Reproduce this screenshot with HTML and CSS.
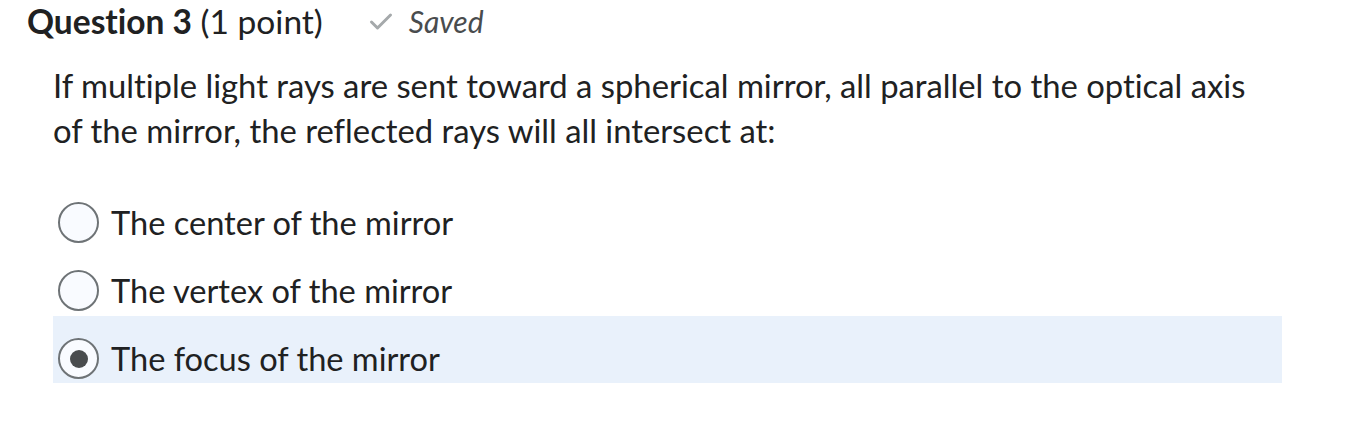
FILE: index.html
```html
<!DOCTYPE html>
<html lang="en">
<head>
<meta charset="utf-8">
<link rel="stylesheet" href="styles.css">
</head>
<body>
<div class="question">
  <div class="q-header">
    <h2 class="q-title"><strong>Question 3</strong> (1 point)</h2>
    <span class="saved">
      <svg class="check" width="24" height="19" viewBox="0 0 24 19"><path d="M2.5 10 L8.5 16 L21.5 3" fill="none" stroke="#a5a9ab" stroke-width="3" stroke-linecap="round" stroke-linejoin="round"/></svg>
      <em>Saved</em>
    </span>
  </div>
  <p class="q-text">If multiple light rays are sent toward a spherical mirror, all parallel to the optical axis of the mirror, the reflected rays will all intersect at:</p>
  <div class="options">
    <label class="option"><span class="radio"></span><span class="opt-text">The center of the mirror</span></label>
    <label class="option"><span class="radio"></span><span class="opt-text">The vertex of the mirror</span></label>
    <label class="option selected"><span class="radio"><span class="dot"></span></span><span class="opt-text">The focus of the mirror</span></label>
  </div>
</div>
</body>
</html>
```
FILE: styles.css
```css
html, body {
  margin: 0;
  padding: 0;
  background: #ffffff;
}
body {
  font-family: Lato, "Liberation Sans", sans-serif;
  font-variant-ligatures: none;
  color: #202122;
}
.question {
  width: 1356px;
}
.q-header {
  display: flex;
  align-items: center;
  padding-left: 27px;
  height: 42px;
}
.q-title {
  margin: 0;
  font-size: 33.5px;
  font-weight: 400;
}
.q-title strong {
  font-weight: 700;
}
.saved {
  display: flex;
  align-items: center;
  margin-left: 46px;
  color: #494c4e;
  font-size: 30px;
}
.check {
  margin-right: 16px;
}
.saved em {
  font-style: italic;
}
.q-text {
  margin: 21px 0 0 53px;
  width: 1215px;
  font-size: 32.8px;
  line-height: 45px;
}
.options {
  margin-top: 27px;
  width: 1229px;
  margin-left: 53px;
}
.option {
  box-sizing: border-box;
  display: flex;
  align-items: center;
  height: 67px;
  padding: 22px 0 4px 5px;
  font-size: 32.6px;
}
.option + .option {
  margin-top: 1px;
}
.option.selected {
  background: #e9f1fb;
}
.radio {
  box-sizing: border-box;
  width: 41px;
  height: 41px;
  border-radius: 50%;
  border: 2px solid #6e7376;
  background: #f9fbff;
  display: flex;
  align-items: center;
  justify-content: center;
  margin-right: 12px;
  flex-shrink: 0;
}
.dot {
  width: 18px;
  height: 18px;
  border-radius: 50%;
  background: #494c4e;
}
```
